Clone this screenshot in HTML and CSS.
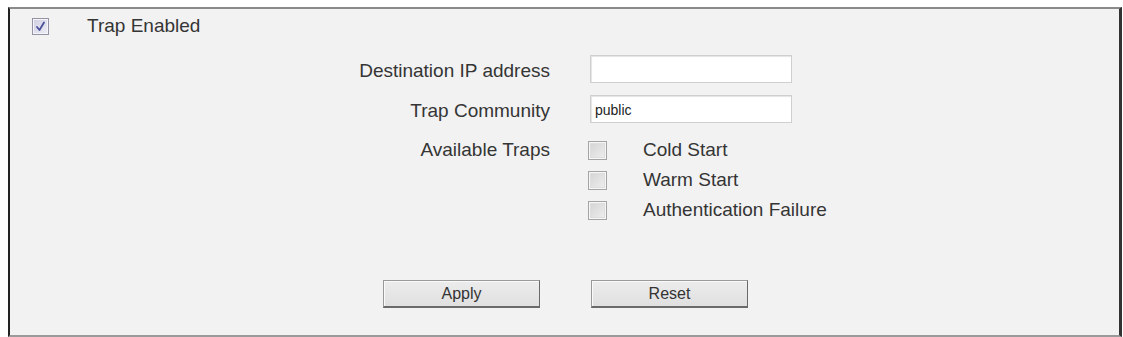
FILE: index.html
```html
<!DOCTYPE html>
<html lang="en">
<head>
<meta charset="UTF-8">
<title>Trap Settings</title>
<link rel="stylesheet" href="styles.css">
</head>
<body>
<div class="panel">
  <div class="enable-row">
    <span class="box checked">
      <svg width="11" height="11" viewBox="0 0 11 11"><path d="M2 6 L4.5 9 L9 1.5" fill="none" stroke="#4a4f9a" stroke-width="1.8" stroke-linecap="round" stroke-linejoin="round"/></svg>
    </span>
    <span class="enable-label">Trap Enabled</span>
  </div>

  <div class="form">
    <label class="lbl">Destination IP address</label>
    <input class="txt" type="text" value="">

    <label class="lbl">Trap Community</label>
    <input class="txt" type="text" value="public">

    <label class="lbl lbl-top">Available Traps</label>
    <div class="traps">
      <div class="trap"><span class="box"></span><span>Cold Start</span></div>
      <div class="trap"><span class="box"></span><span>Warm Start</span></div>
      <div class="trap"><span class="box"></span><span>Authentication Failure</span></div>
    </div>
  </div>

  <div class="buttons">
    <button class="btn">Apply</button>
    <button class="btn">Reset</button>
  </div>
</div>
</body>
</html>
```

FILE: styles.css
```css
body {
  margin: 7px 1px 0 8px;
  background: #fff;
  font-family: "Liberation Sans", Arial, sans-serif;
  color: #353535;
}

.panel {
  height: 330px;
  box-sizing: border-box;
  background: #f2f2f2;
  border-top: 2px solid #8a8a8a;
  border-bottom: 2px solid #9a9a9a;
  border-left: 2px solid #222;
  border-right: 3px solid #333;
}

.enable-row {
  display: flex;
  align-items: center;
  height: 18px;
  padding: 8px 0 0 22px;
  font-size: 19px;
}

.enable-label {
  margin-left: 38px;
}

.box {
  width: 17px;
  height: 17px;
  box-sizing: border-box;
  border: 1px solid #a4a4a4;
  background: linear-gradient(135deg, #d2d2d2, #f0f0f0);
  box-shadow: inset 0 0 0 1px #f6f6f6, inset 0 0 0 2px #dedede;
  display: flex;
  align-items: center;
  justify-content: center;
  flex-shrink: 0;
}

.box.checked {
  border-color: #9494a4;
  background: linear-gradient(135deg, #cfcfe2, #ededf6);
  box-shadow: inset 0 0 0 1px #f4f4fa;
}

.form {
  display: grid;
  grid-template-columns: 200px 202px;
  column-gap: 40px;
  row-gap: 12px;
  margin: 20px 0 0 340px;
  font-size: 19px;
}

.lbl {
  text-align: right;
  align-self: center;
  white-space: nowrap;
  padding-top: 3px;
}

.lbl-top {
  align-self: start;
  padding-top: 4px;
}

.txt {
  height: 28px;
  box-sizing: border-box;
  border: 1px solid #cfcfcf;
  box-shadow: inset 1px 1px 1px #e4e4e4;
  background: #fff;
  font-family: "Liberation Sans", Arial, sans-serif;
  font-size: 14px;
  color: #222;
  padding: 2px 4px 0;
  margin: 0;
}

.traps {
  display: flex;
  flex-direction: column;
}

.trap {
  display: flex;
  align-items: center;
  height: 30px;
  white-space: nowrap;
}

.trap .box {
  width: 19px;
  height: 19px;
  margin: 0 36px 0 -2px;
}

.buttons {
  display: flex;
  gap: 51px;
  margin: 55px 0 0 373px;
}

.btn {
  width: 157px;
  height: 28px;
  box-sizing: border-box;
  background: linear-gradient(#ececec, #e0e0e0);
  border: 1px solid #9a9a9a;
  border-right-color: #6a6a6a;
  border-bottom: 2px solid #6a6a6a;
  box-shadow: inset 1px 1px 0 #fafafa;
  font-family: "Liberation Sans", Arial, sans-serif;
  font-size: 16px;
  color: #333;
  padding: 0;
}
```
